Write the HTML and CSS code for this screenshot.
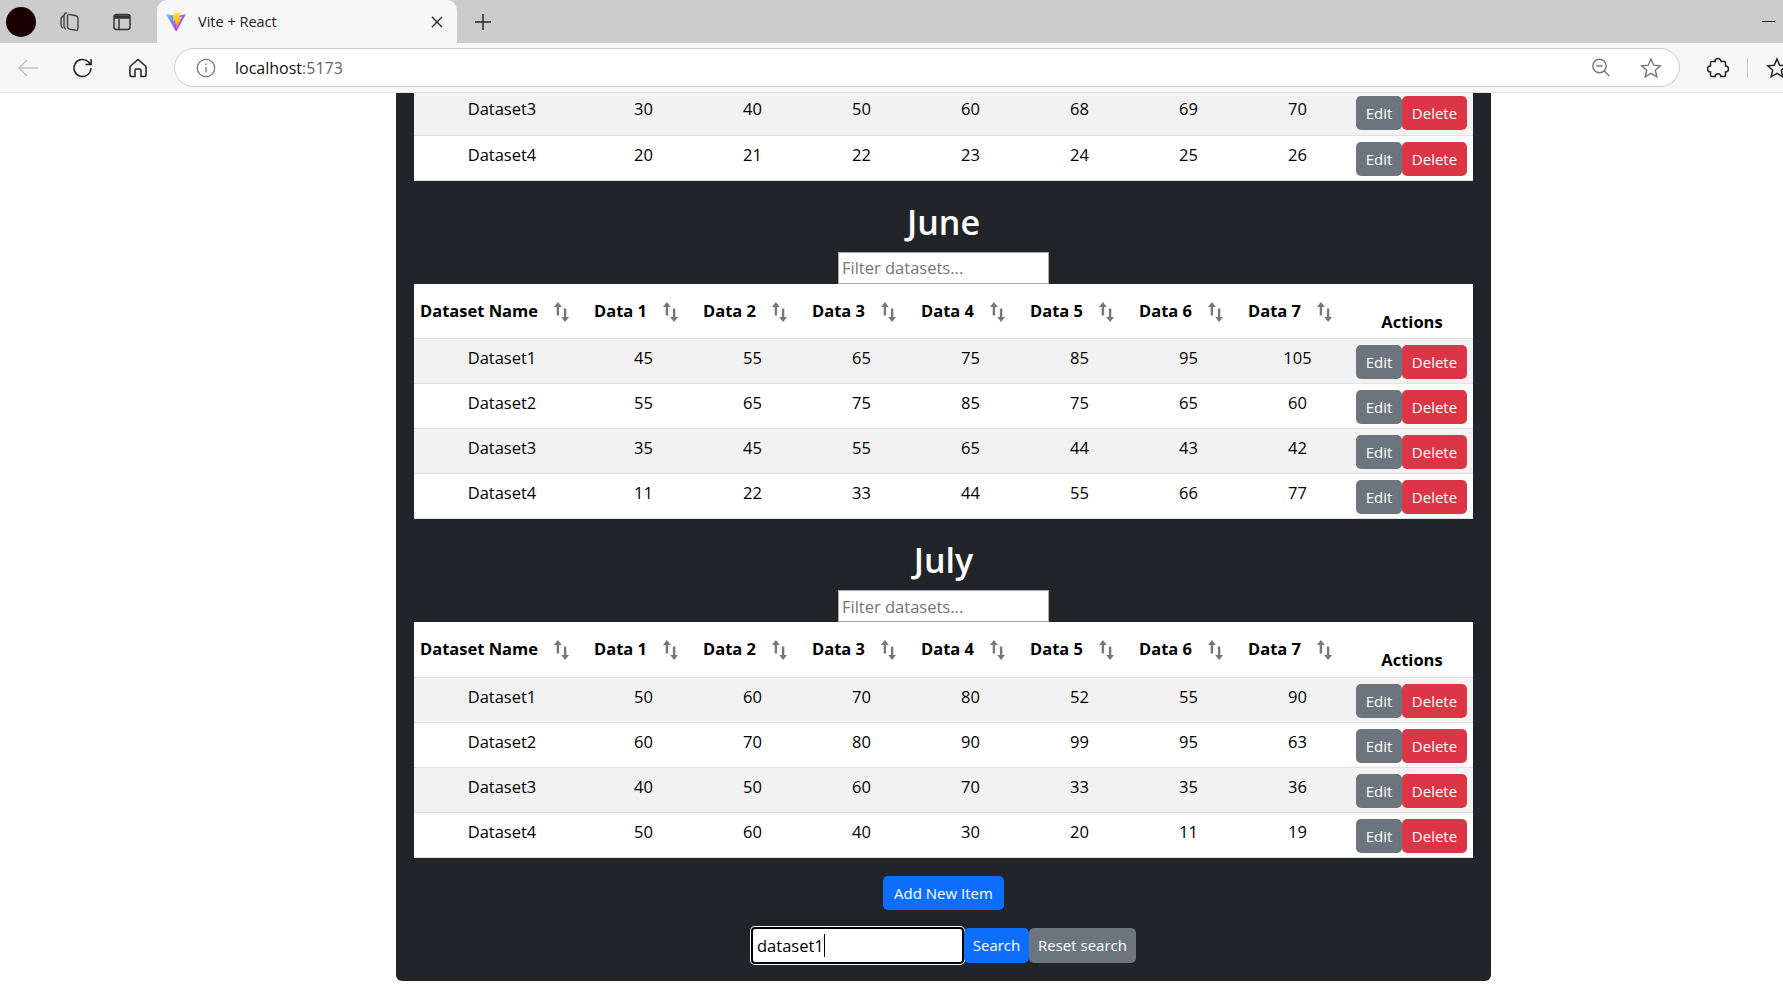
FILE: index.html
```html
<!doctype html>
<html lang="en">
<head>
  <meta charset="UTF-8" />
  <title>Vite + React</title>
  <link rel="stylesheet" href="styles.css">
</head>
<body>
  <svg class="icon-defs" width="0" height="0">
    <symbol id="sort-arrows" viewBox="0 0 15 20">
      <path d="M3.900 4v9.500" fill="none" stroke="#777" stroke-width="2.400"/>
      <path d="M3.900 0L7.800 5H0z" fill="#777"/>
      <path d="M11.100 6.500V16" fill="none" stroke="#777" stroke-width="2.400"/>
      <path d="M11.100 20L7.200 15H15z" fill="#777"/>
    </symbol>
  </svg>

  <div class="tabstrip">
    <span class="avatar"></span>
    <svg class="strip-icon collections" width="22" height="22" viewBox="0 0 22 22" fill="none" stroke="#444" stroke-width="1.4">
      <path d="M2 8c0-1.500 1-2.500 2.500-3M5 5c0-1.500 1-2.800 2.800-3.200"/>
      <path d="M2 8v6c0 1.500 .7 2.500 2 3"/>
      <path d="M5 5v10c0 1.500 .7 2.600 2 3.200"/>
      <path d="M8.500 5.500c0-1.500 1-2.300 2.400-2l6 1.200c1.400.3 2.100 1.200 2.100 2.600v10c0 1.500-1 2.300-2.400 2l-6-1.200c-1.400-.3-2.100-1.200-2.100-2.600z"/>
    </svg>
    <svg class="strip-icon tabs-icon" width="20" height="20" viewBox="0 0 20 20" fill="none" stroke="#333" stroke-width="1.5">
      <rect x="2" y="2.500" width="16" height="15" rx="2.500"/>
      <path d="M2 5h16" stroke-width="3.500"/>
      <path d="M7 7v10"/>
    </svg>
    <div class="tab">
      <svg class="vite-logo" width="20" height="20" viewBox="0 0 410 404" fill="none">
        <defs>
          <linearGradient id="vite-a" x1="6" y1="33" x2="235" y2="344" gradientUnits="userSpaceOnUse">
            <stop offset="0" stop-color="#41D1FF"/><stop offset="1" stop-color="#BD34FE"/>
          </linearGradient>
          <linearGradient id="vite-b" x1="194" y1="8" x2="236" y2="292" gradientUnits="userSpaceOnUse">
            <stop offset="0" stop-color="#FFEA83"/><stop offset=".08" stop-color="#FFDD35"/><stop offset="1" stop-color="#FFA800"/>
          </linearGradient>
        </defs>
        <path fill="url(#vite-a)" d="M399.641 59.5246L215.643 388.545C211.844 395.338 202.084 395.378 198.228 388.618L10.5817 59.5563C6.38087 52.1896 12.6802 43.2665 21.0281 44.7586L205.223 77.6824C206.398 77.8924 207.601 77.8904 208.776 77.6763L389.119 44.8058C397.439 43.2894 403.768 52.1434 399.641 59.5246Z"/>
        <path fill="url(#vite-b)" d="M292.965 1.5744L156.801 28.2552C154.563 28.6937 152.906 30.5903 152.771 32.8664L144.395 174.33C144.198 177.662 147.258 180.248 150.51 179.498L188.42 170.749C191.967 169.931 195.172 173.055 194.443 176.622L183.18 231.775C182.422 235.487 185.907 238.661 189.532 237.56L212.947 230.446C216.577 229.344 220.065 232.527 219.297 236.242L201.398 322.875C200.278 328.294 207.486 331.249 210.492 326.603L212.5 323.5L323.454 102.072C325.312 98.3645 322.108 94.137 318.036 94.9228L279.014 102.454C275.347 103.161 272.227 99.746 273.262 96.1583L298.731 7.86689C299.767 4.27314 296.636 0.855181 292.965 1.5744Z"/>
      </svg>
      <span class="tab-title">Vite + React</span>
      <svg class="tab-close" width="12" height="12" viewBox="0 0 12 12" stroke="#222" stroke-width="1.3"><path d="M1 1l10 10M11 1L1 11"/></svg>
    </div>
    <svg class="new-tab" width="18" height="18" viewBox="0 0 18 18" stroke="#222" stroke-width="1.4"><path d="M9 1v16M1 9h16"/></svg>
    <span class="minimize"></span>
  </div>

  <div class="toolbar">
    <svg class="tool back" width="22" height="20" viewBox="0 0 22 20" fill="none" stroke="#c4c4c4" stroke-width="1.5"><path d="M21 10H2M10 2l-8 8 8 8"/></svg>
    <svg class="tool reload" width="22" height="22" viewBox="0 0 22 22" fill="none" stroke="#222" stroke-width="1.5"><path d="M19 11a8.500 8.500 0 1 1-2.600-6.100L19 7.500M19.200 2v5.600h-5.600"/></svg>
    <svg class="tool home" width="22" height="22" viewBox="0 0 22 22" fill="none" stroke="#222" stroke-width="1.5"><path d="M3 9.500L11 2.500l8 7v8.500a1.500 1.500 0 0 1-1.500 1.500H14v-6a1.500 1.500 0 0 0-1.500-1.500h-3A1.500 1.500 0 0 0 8 13.500v6H4.500A1.500 1.500 0 0 1 3 18z"/></svg>
    <div class="address">
      <svg class="info" width="20" height="20" viewBox="0 0 20 20" fill="none" stroke="#777" stroke-width="1.3"><circle cx="10" cy="10" r="8.700"/><path d="M10 9v5.500M10 5.500v1.500"/></svg>
      <span class="url">localhost<span class="port">:5173</span></span>
      <svg class="zoom-out" width="20" height="20" viewBox="0 0 20 20" fill="none" stroke="#777" stroke-width="1.4"><circle cx="8.500" cy="8" r="6.700"/><path d="M5.500 8h6M13.300 13l5 5"/></svg>
      <svg class="fav" width="22" height="22" viewBox="0 0 22 22" fill="none" stroke="#777" stroke-width="1.400"><path d="M11 2l2.700 6.200 6.600.6-5 4.400 1.500 6.600L11 16.300l-5.800 3.500 1.500-6.600-5-4.400 6.600-.6z"/></svg>
    </div>
    <svg class="tool puzzle" width="22" height="22" viewBox="0 0 22 22" fill="none" stroke="#222" stroke-width="1.500"><path d="M8 4.500a3 3 0 0 1 6 0h3.500a1 1 0 0 1 1 1V9a3 3 0 0 1 0 6v3a1.500 1.500 0 0 1-1.500 1.500h-3.200a2.800 2.800 0 0 0-5.600 0H5A1.500 1.500 0 0 1 3.500 18v-3a3 3 0 0 1 0-6V6A1.500 1.500 0 0 1 5 4.500z"/></svg>
    <span class="tool-sep"></span>
    <svg class="tool fav-list" width="22" height="22" viewBox="0 0 22 22" fill="none" stroke="#222" stroke-width="1.500"><path d="M11 2l2.700 6.200 6.600.6-5 4.400 1.500 6.600L11 16.300l-5.800 3.500 1.500-6.600-5-4.400 6.600-.6z"/></svg>
  </div>

  <div class="viewport">
    <main class="card">
      <section class="month first-month">
        <table class="data-table">
          <tbody>
            <tr><td>Dataset3</td><td>30</td><td>40</td><td>50</td><td>60</td><td>68</td><td>69</td><td>70</td><td class="row-actions"><button class="btn btn-grey">Edit</button><button class="btn btn-red">Delete</button></td></tr>
            <tr><td>Dataset4</td><td>20</td><td>21</td><td>22</td><td>23</td><td>24</td><td>25</td><td>26</td><td class="row-actions"><button class="btn btn-grey">Edit</button><button class="btn btn-red">Delete</button></td></tr>
          </tbody>
        </table>
      </section>

      <section class="month">
        <h2>June</h2>
        <input class="filter" type="text" placeholder="Filter datasets...">
        <table class="data-table">
          <thead>
            <tr>
              <th><div class="sort-head">Dataset Name<svg class="sort"><use href="#sort-arrows"/></svg></div></th>
              <th><div class="sort-head">Data 1<svg class="sort"><use href="#sort-arrows"/></svg></div></th>
              <th><div class="sort-head">Data 2<svg class="sort"><use href="#sort-arrows"/></svg></div></th>
              <th><div class="sort-head">Data 3<svg class="sort"><use href="#sort-arrows"/></svg></div></th>
              <th><div class="sort-head">Data 4<svg class="sort"><use href="#sort-arrows"/></svg></div></th>
              <th><div class="sort-head">Data 5<svg class="sort"><use href="#sort-arrows"/></svg></div></th>
              <th><div class="sort-head">Data 6<svg class="sort"><use href="#sort-arrows"/></svg></div></th>
              <th><div class="sort-head">Data 7<svg class="sort"><use href="#sort-arrows"/></svg></div></th>
              <th class="actions-head">Actions</th>
            </tr>
          </thead>
          <tbody>
            <tr><td>Dataset1</td><td>45</td><td>55</td><td>65</td><td>75</td><td>85</td><td>95</td><td>105</td><td class="row-actions"><button class="btn btn-grey">Edit</button><button class="btn btn-red">Delete</button></td></tr>
            <tr><td>Dataset2</td><td>55</td><td>65</td><td>75</td><td>85</td><td>75</td><td>65</td><td>60</td><td class="row-actions"><button class="btn btn-grey">Edit</button><button class="btn btn-red">Delete</button></td></tr>
            <tr><td>Dataset3</td><td>35</td><td>45</td><td>55</td><td>65</td><td>44</td><td>43</td><td>42</td><td class="row-actions"><button class="btn btn-grey">Edit</button><button class="btn btn-red">Delete</button></td></tr>
            <tr><td>Dataset4</td><td>11</td><td>22</td><td>33</td><td>44</td><td>55</td><td>66</td><td>77</td><td class="row-actions"><button class="btn btn-grey">Edit</button><button class="btn btn-red">Delete</button></td></tr>
          </tbody>
        </table>
      </section>

      <section class="month">
        <h2>July</h2>
        <input class="filter" type="text" placeholder="Filter datasets...">
        <table class="data-table">
          <thead>
            <tr>
              <th><div class="sort-head">Dataset Name<svg class="sort"><use href="#sort-arrows"/></svg></div></th>
              <th><div class="sort-head">Data 1<svg class="sort"><use href="#sort-arrows"/></svg></div></th>
              <th><div class="sort-head">Data 2<svg class="sort"><use href="#sort-arrows"/></svg></div></th>
              <th><div class="sort-head">Data 3<svg class="sort"><use href="#sort-arrows"/></svg></div></th>
              <th><div class="sort-head">Data 4<svg class="sort"><use href="#sort-arrows"/></svg></div></th>
              <th><div class="sort-head">Data 5<svg class="sort"><use href="#sort-arrows"/></svg></div></th>
              <th><div class="sort-head">Data 6<svg class="sort"><use href="#sort-arrows"/></svg></div></th>
              <th><div class="sort-head">Data 7<svg class="sort"><use href="#sort-arrows"/></svg></div></th>
              <th class="actions-head">Actions</th>
            </tr>
          </thead>
          <tbody>
            <tr><td>Dataset1</td><td>50</td><td>60</td><td>70</td><td>80</td><td>52</td><td>55</td><td>90</td><td class="row-actions"><button class="btn btn-grey">Edit</button><button class="btn btn-red">Delete</button></td></tr>
            <tr><td>Dataset2</td><td>60</td><td>70</td><td>80</td><td>90</td><td>99</td><td>95</td><td>63</td><td class="row-actions"><button class="btn btn-grey">Edit</button><button class="btn btn-red">Delete</button></td></tr>
            <tr><td>Dataset3</td><td>40</td><td>50</td><td>60</td><td>70</td><td>33</td><td>35</td><td>36</td><td class="row-actions"><button class="btn btn-grey">Edit</button><button class="btn btn-red">Delete</button></td></tr>
            <tr><td>Dataset4</td><td>50</td><td>60</td><td>40</td><td>30</td><td>20</td><td>11</td><td>19</td><td class="row-actions"><button class="btn btn-grey">Edit</button><button class="btn btn-red">Delete</button></td></tr>
          </tbody>
        </table>
      </section>

      <div class="add-row"><button class="btn btn-blue">Add New Item</button></div>
      <div class="search-row">
        <div class="search-box">dataset1<span class="caret"></span></div>
        <button class="btn btn-blue">Search</button>
        <button class="btn btn-grey">Reset search</button>
      </div>
    </main>
  </div>
</body>
</html>
```

FILE: styles.css
```css
* {
  box-sizing: border-box;
}
html, body {
  height: 100%;
}
body {
  margin: 0;
  height: 990px;
  overflow: hidden;
  display: flex;
  flex-direction: column;
  font-family: "Open Sans", "Noto Sans", Arial, sans-serif;
  color: #000;
  background: #fff;
}
.icon-defs {
  display: none;
}

/* browser frame */
.tabstrip {
  height: 43px;
  flex: none;
  display: flex;
  align-items: center;
  background: #ccc;
  padding-left: 6px;
}
.avatar {
  width: 30px;
  height: 30px;
  border-radius: 50%;
  background: #1a0000;
  margin-right: 23px;
}
.collections {
  margin-right: 31px;
}
.tabs-icon {
  margin-right: 25px;
}
.tab {
  width: 300px;
  height: 43px;
  align-self: flex-end;
  display: flex;
  align-items: center;
  padding: 0 14px 0 9px;
  background: #f7f7f7;
  border-radius: 10px 10px 0 0;
  font-size: 14.500px;
}
.tab-title {
  flex: 1;
  margin-left: 12px;
  color: #222;
}
.new-tab {
  margin-left: 17px;
}
.minimize {
  margin-left: auto;
  margin-right: 8px;
  width: 13px;
  height: 1px;
  background: #222;
}
.toolbar {
  height: 50px;
  flex: none;
  display: flex;
  align-items: center;
  background: #f7f7f7;
  border-bottom: 1px solid #e6e6e6;
  padding-left: 17px;
  overflow: hidden;
}
.tool {
  flex: none;
}
.reload {
  margin-left: 33px;
}
.home {
  margin-left: 33px;
}
.address {
  width: 1506px;
  height: 39px;
  margin-left: 25px;
  flex: none;
  display: flex;
  align-items: center;
  background: #fff;
  border: 1px solid #ccc;
  border-radius: 20px;
  padding: 0 17px 0 21px;
}
.url {
  margin-left: 19px;
  font-size: 16px;
  color: #111;
}
.port {
  color: #666;
}
.zoom-out {
  margin-left: auto;
  margin-right: 29px;
}
.puzzle {
  margin-left: 27px;
}
.tool-sep {
  width: 1px;
  height: 20px;
  background: #ccc;
  margin: 0 18px;
  flex: none;
}

/* page */
.viewport {
  flex: 1;
  overflow: hidden;
}
.card {
  width: 1095px;
  margin: -3px 0 0 396px;
  padding: 0 18px 17px;
  background: #212529;
  border-radius: 0 0 6px 6px;
}
.month {
  text-align: center;
}
h2 {
  margin: 0;
  height: 71px;
  padding-top: 18px;
  font-size: 34px;
  line-height: 46px;
  font-weight: 600;
  color: #fff;
}
.filter {
  display: block;
  width: 211px;
  height: 32px;
  margin: 0 auto;
  padding: 0 3px;
  border: 1px solid #aaa;
  background: #fff;
  font: 16.500px "Open Sans", sans-serif;
}
.filter::placeholder {
  color: #757575;
}
.data-table {
  width: 100%;
  table-layout: fixed;
  border-collapse: collapse;
  background: #fff;
  font-size: 16.500px;
  line-height: 27px;
}
.data-table th {
  width: 109px;
  height: 55px;
  padding: 0 6px;
  vertical-align: top;
  text-align: left;
  font-weight: 700;
  border-bottom: 1px solid #dee2e6;
}
.data-table th:first-child,
.data-table td:first-child {
  width: 174px;
}
.data-table th.actions-head,
.data-table td.row-actions {
  width: 122px;
}
.data-table th.actions-head {
  padding-top: 24px;
  text-align: center;
}
.sort-head {
  display: flex;
  align-items: flex-start;
  padding-top: 13px;
  white-space: nowrap;
}
.sort {
  flex: none;
  width: 15px;
  height: 20px;
  margin: 5px 0 0 16px;
}
.data-table td {
  height: 45px;
  padding: 5px 5px 5px 7px;
  vertical-align: top;
  text-align: center;
  border-bottom: 1px solid #dee2e6;
}
.data-table tbody tr:nth-child(odd) {
  background: #f2f2f2;
}
.data-table td.row-actions {
  padding: 6px 6px 0 0;
  white-space: nowrap;
  text-align: right;
  font-size: 0;
  line-height: 0;
}
.btn {
  height: 34px;
  padding: 0 10px;
  border: 0;
  border-radius: 5px;
  color: #fff;
  font: 15px/34px "Open Sans", sans-serif;
  vertical-align: top;
}
.row-actions .btn-grey {
  width: 46px;
  padding: 0;
}
.row-actions .btn-red {
  width: 65px;
  padding: 0;
}
.btn-grey {
  background: #6c757d;
}
.btn-red {
  background: #dc3545;
}
.btn-blue {
  background: #0d6efd;
}
.add-row {
  display: flex;
  justify-content: center;
  margin-top: 18px;
}
.add-row .btn {
  width: 121px;
  padding: 0;
}
.search-row {
  display: flex;
  justify-content: center;
  align-items: center;
  margin-top: 17px;
}
.search-box {
  width: 213px;
  height: 37px;
  padding-left: 4px;
  display: flex;
  align-items: center;
  background: #fff;
  border: 2px solid #000;
  border-radius: 4px;
  box-shadow: 0 0 0 1px #fff;
  font-size: 16.500px;
}
.caret {
  width: 1px;
  height: 23px;
  background: #000;
}
.search-row .btn {
  height: 35px;
  padding: 0;
}
.search-row .btn-blue {
  width: 65px;
}
.search-row .btn-grey {
  width: 107px;
}
```
